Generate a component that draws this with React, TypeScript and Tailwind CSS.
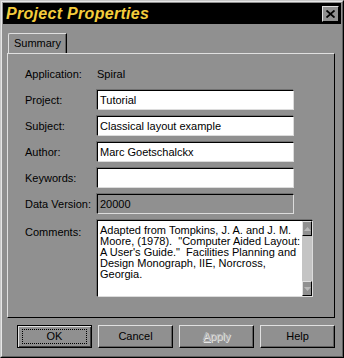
import React from "react";

const sunken =
  "border border-t-black border-l-black border-r-[#dcdcdc] border-b-[#dcdcdc] shadow-[-1px_-1px_0_#707070]";

function Field({ value, disabled }: { value: string; disabled?: boolean }) {
  return (
    <div
      className={`h-[20px] w-[197px] ${sunken} ${disabled ? "bg-[#909090]" : "bg-white"} px-[2px] leading-[18px] text-black`}
    >
      {value}
    </div>
  );
}

function Btn({ label, def, disabled }: { label: string; def?: boolean; disabled?: boolean }) {
  return (
    <div
      className={`h-[23px] w-[75px] flex items-center justify-center border ${
        def
          ? "border-black shadow-[inset_1px_1px_0_#e0e0e0,inset_-1px_-1px_0_#404040]"
          : "border-t-[#e0e0e0] border-l-[#e0e0e0] border-r-black border-b-black shadow-[inset_-1px_-1px_0_#606060]"
      }`}
    >
      {def ? (
        <span className="flex h-[15px] w-[65px] items-center justify-center border border-dotted border-black">
          {label}
        </span>
      ) : disabled ? (
        <span className="text-[#b8b8b8] [text-shadow:1px_1px_0_#e8e8e8]">
          <span className="underline">A</span>pply
        </span>
      ) : (
        <span>{label}</span>
      )}
    </div>
  );
}

export default function App() {
  const rows: [string, string][] = [
    ["Project:", "Tutorial"],
    ["Subject:", "Classical layout example"],
    ["Author:", "Marc Goetschalckx"],
    ["Keywords:", ""],
  ];
  return (
    <div className="w-[344px] h-[358px] bg-[#909090] border border-t-[#c8c8c8] border-l-[#c8c8c8] border-r-black border-b-black font-['Liberation_Sans',Arial,sans-serif] text-[11px] text-black">
      <div className="h-full w-full border border-t-[#e8e8e8] border-l-[#e8e8e8] border-r-[#606060] border-b-[#606060] px-[1px] pt-[1px]">
        {/* title bar */}
        <div className="flex h-[21px] items-center justify-between bg-black pl-[3px] pr-[2px]">
          <span className="text-[16px] font-bold italic tracking-[0.3px] text-[#f4cc3c]">
            Project Properties
          </span>
          <div className="flex h-[16px] w-[17px] items-center justify-center bg-[#909090] border border-t-[#e0e0e0] border-l-[#e0e0e0] border-r-black border-b-black">
            <svg width="9" height="8" viewBox="0 0 9 8">
              <path d="M0.5 0.5 L8.5 7.5 M8.5 0.5 L0.5 7.5" stroke="#000" strokeWidth="1.8" />
            </svg>
          </div>
        </div>

        {/* tab */}
        <div className="mt-[9px] ml-[5px] flex">
          <div className="flex h-[20px] w-[59px] items-center justify-center rounded-tl-[2px] border-t border-l border-r border-t-[#e0e0e0] border-l-[#e0e0e0] border-r-black shadow-[inset_-1px_0_0_#606060]">
            Summary
          </div>
        </div>

        {/* panel */}
        <div className="ml-[4px] flex h-[265px] w-[328px] flex-col border border-t-[#e0e0e0] border-l-[#e0e0e0] border-r-black border-b-black pl-[17px] pt-[10px]">
          <div className="flex h-[20px] items-center">
            <span className="w-[72px]">Application:</span>
            <span>Spiral</span>
          </div>
          {rows.map(([l, v]) => (
            <div key={l} className="mt-[6px] flex items-center">
              <span className="w-[72px]">{l}</span>
              <Field value={v} />
            </div>
          ))}
          <div className="mt-[6px] flex items-center">
            <span className="w-[72px]">Data Version:</span>
            <Field value="20000" disabled />
          </div>
          <div className="mt-[6px] flex items-start">
            <span className="w-[72px] pt-[4px]">Comments:</span>
            <div className={`flex h-[77px] w-[216px] bg-white ${sunken}`}>
              <div className="flex-1 px-[2px] pt-[4px] leading-[11px] whitespace-pre">
                {"Adapted from Tompkins, J. A. and J. M.\nMoore, (1978).  \"Computer Aided Layout:\nA User's Guide.\"  Facilities Planning and\nDesign Monograph, IIE, Norcross,\nGeorgia."}
              </div>
              <div className="flex w-[15px] flex-col justify-between bg-[#c4c4c4]">
                <div className="flex h-[15px] items-center justify-center bg-[#909090] border border-t-[#e0e0e0] border-l-[#e0e0e0] border-r-black border-b-black">
                  <svg width="7" height="4" viewBox="0 0 7 4">
                    <path d="M3.5 0 L7 4 L0 4 Z" fill="#b8b8b8" />
                  </svg>
                </div>
                <div className="flex h-[15px] items-center justify-center bg-[#909090] border border-t-[#e0e0e0] border-l-[#e0e0e0] border-r-black border-b-black">
                  <svg width="7" height="4" viewBox="0 0 7 4">
                    <path d="M0 0 L7 0 L3.5 4 Z" fill="#b8b8b8" />
                  </svg>
                </div>
              </div>
            </div>
          </div>
        </div>

        {/* buttons */}
        <div className="mt-[7px] ml-[14px] flex gap-[6px]">
          <Btn label="OK" def />
          <Btn label="Cancel" />
          <Btn label="Apply" disabled />
          <Btn label="Help" />
        </div>
      </div>
    </div>
  );
}
